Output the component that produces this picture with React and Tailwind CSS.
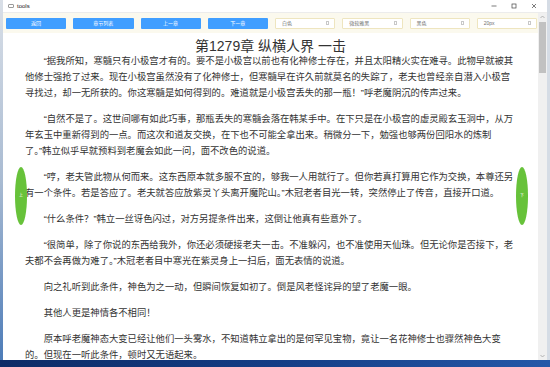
const paragraphs = [
  "“据我所知，寒髓只有小极宫才有的。要不是小极宫以前也有化神修士存在，并且太阳精火实在难寻。此物早就被其他修士强抢了过来。现在小极宫虽然没有了化神修士，但寒髓早在许久前就莫名的失踪了，老夫也曾经亲自潜入小极宫寻找过，却一无所获的。你这寒髓是如何得到的。难道就是小极宫丢失的那一瓶！”呼老魔阴沉的传声过来。",
  "“自然不是了。这世间哪有如此巧事，那瓶丢失的寒髓会落在韩某手中。在下只是在小极宫的虚灵殿玄玉洞中，从万年玄玉中重新得到的一点。而这次和道友交换，在下也不可能全拿出来。稍微分一下，勉强也够两份回阳水的炼制了。”韩立似乎早就预料到老魔会如此一问，面不改色的说道。",
  "“哼，老夫管此物从何而来。这东西原本就多服不宜的，够我一人用就行了。但你若真打算用它作为交换，本尊还另有一个条件。若是答应了。老夫就答应放紫灵丫头离开魔陀山。”木冠老者目光一转，突然停止了传音，直接开口道。",
  "“什么条件？”韩立一丝讶色闪过，对方另提条件出来，这倒让他真有些意外了。",
  "“很简单，除了你说的东西给我外，你还必须硬接老夫一击。不准躲闪，也不准使用天仙珠。但无论你是否接下，老夫都不会再做为难了。”木冠老者目中寒光在紫灵身上一扫后，面无表情的说道。",
  "向之礼听到此条件，神色为之一动，但瞬间恢复如初了。倒是风老怪诧异的望了老魔一眼。",
  "其他人更是神情各不相同！",
  "原本呼老魔神态大变已经让他们一头雾水，不知道韩立拿出的是何罕见宝物，竟让一名花神修士也骤然神色大变的。但现在一听此条件，顿时又无语起来。",
];

const buttons = ["返回", "章节列表", "上一章", "下一章"];
const selects = ["白色", "微软雅黑", "黑色", "20px"];

function WinButton({ children }) {
  return (
    <div className="w-[20px] h-full flex items-center justify-center">
      <svg width="6" height="6" viewBox="0 0 6 6" fill="none" stroke="#444" strokeWidth="0.7">
        {children}
      </svg>
    </div>
  );
}

export default function App() {
  return (
    <div className="w-[550px] h-[367px] overflow-hidden flex flex-col bg-[#c8d2de] font-['Liberation_Sans','Noto_Sans_CJK_SC',sans-serif]">
      <div className="flex h-[360px] shrink-0">
        <div className="w-[3px] bg-gradient-to-b from-[#d9dfe7] via-[#a9bbd2] to-[#4d7cb8]" />
        <div className="w-[544px] h-full bg-white flex flex-col">
          {/* title bar */}
          <div className="h-[13px] shrink-0 flex items-center border-b border-[#ececec]">
            <div className="ml-[5px] w-[6px] h-[4px] border border-[#9a9a9a] rounded-[1px]" />
            <span className="ml-[3px] text-[6px] leading-none text-[#222]">tools</span>
            <div className="ml-auto flex h-full pr-[3px]">
              <WinButton>
                <line x1="0.5" y1="3" x2="5.5" y2="3" />
              </WinButton>
              <WinButton>
                <rect x="1" y="1" width="4" height="4" />
              </WinButton>
              <WinButton>
                <line x1="1" y1="1" x2="5" y2="5" />
                <line x1="5" y1="1" x2="1" y2="5" />
              </WinButton>
            </div>
          </div>

          <div className="flex flex-1 min-h-0">
            <div className="relative flex-1 min-w-0 overflow-hidden">
              {/* toolbar */}
              <div className="h-[20px] bg-[#fbf9ee] grid grid-cols-8 gap-x-[7px] items-center pl-[3px] pr-[1px]">
                {buttons.map((b) => (
                  <div
                    key={b}
                    className="h-[11px] bg-[#409eff] rounded-[1px] flex items-center justify-center text-white text-[5px] leading-none"
                  >
                    {b}
                  </div>
                ))}
                {selects.map((s) => (
                  <div
                    key={s}
                    className="h-[11px] bg-white border border-[#eee5bf] rounded-[1px] flex items-center justify-between pl-[6px] pr-[5px] text-[#707070] text-[5px] leading-none"
                  >
                    <span>{s}</span>
                    <span className="w-[3px] h-[4px] border border-[#c8c8c8]" />
                  </div>
                ))}
              </div>

              {/* chapter title */}
              <h1 className="mt-[6px] text-center text-[14px] leading-[14px] text-[#333] font-normal">
                第1279章 纵横人界 一击
              </h1>

              {/* body */}
              <div className="pl-[22px]">
                <div className="w-[491px] text-[9.33px] leading-[16px] text-[#333]">
                  {paragraphs.map((p, i) => (
                    <p key={i} className="indent-[2em] mb-[10px]">
                      {p}
                    </p>
                  ))}
                </div>
              </div>

              {/* side page buttons */}
              <div className="absolute left-[12px] top-[154px] w-[12px] h-[58px] rounded-[50%] bg-[#67c23a] flex items-center justify-center text-white text-[4px] leading-none">
                上
              </div>
              <div className="absolute left-[513px] top-[154px] w-[12px] h-[58px] rounded-[50%] bg-[#67c23a] flex items-center justify-center text-white text-[4px] leading-none">
                下
              </div>
            </div>

            {/* scrollbar */}
            <div className="w-[9px] shrink-0 bg-[#f0f0f0] flex flex-col items-center">
              <svg width="9" height="8" viewBox="0 0 9 8">
                <path d="M2.5 5 L4.5 3 L6.5 5" fill="none" stroke="#a3a3a3" strokeWidth="0.8" />
              </svg>
              <div className="w-[7px] h-[51px] bg-[#c1c1c1] mt-[1px]" />
              <div className="flex-1" />
              <svg width="9" height="8" viewBox="0 0 9 8">
                <path d="M2.5 3 L4.5 5 L6.5 3" fill="none" stroke="#a3a3a3" strokeWidth="0.8" />
              </svg>
            </div>
          </div>
        </div>
        <div className="flex-1 bg-[#d5dce5]" />
      </div>
      <div className="flex-1 bg-gradient-to-r from-[#0d2b66] via-[#143d85] to-[#2458a8]" />
    </div>
  );
}
